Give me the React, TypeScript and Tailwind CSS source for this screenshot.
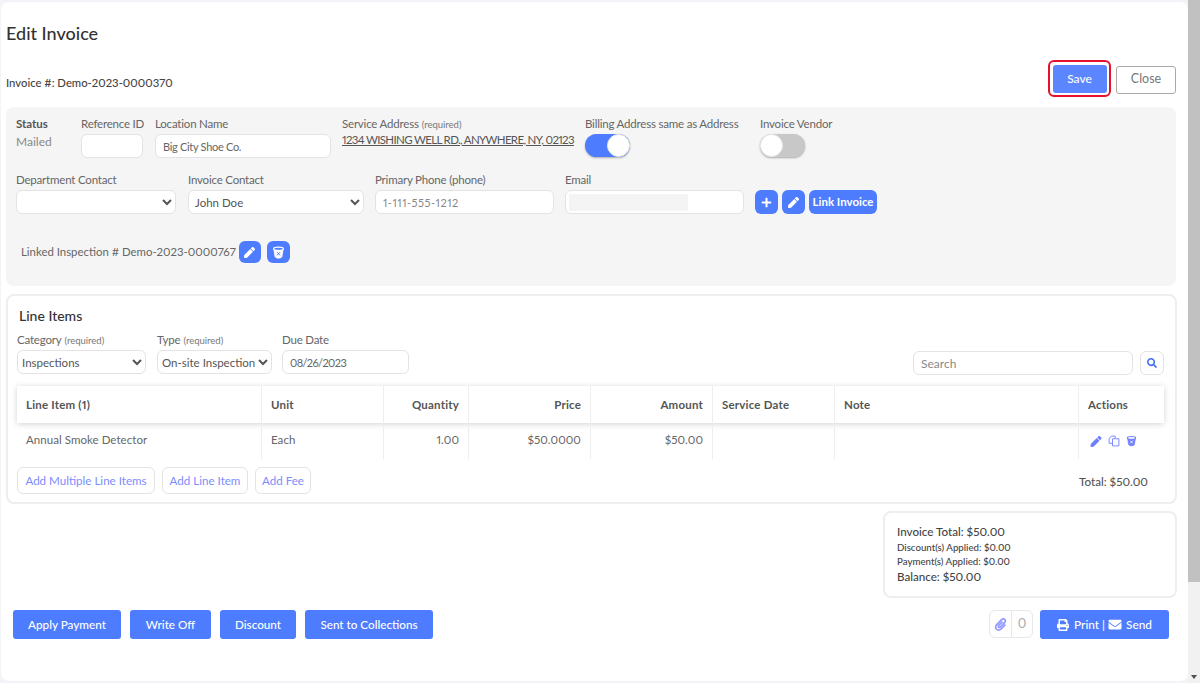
/**
 * EditInvoice page
 */

import { FaPlus, FaPen, FaSearch, FaPrint, FaEnvelope, FaPaperclip } from "react-icons/fa";

const BLUE = "bg-[#4d7cfe]";

const inputClass =
  "h-[24px] rounded-md border border-[#e3e3e3] bg-white px-[7px] text-[11px] text-[#666] outline-none";

const selectClass =
  "h-[24px] rounded-md border border-[#e3e3e3] bg-white text-[11.5px] text-[#555] outline-none";

// Bucket-style delete icon used in the app
function TrashIcon({ className, cut = "#fff" }: { className: string; cut?: string }) {
  return (
    <svg viewBox="0 0 16 16" className={className} fill="none" stroke="currentColor">
      <path d="M2.4 4.5 L3.8 13 Q4.2 15 8 15 Q11.8 15 12.2 13 L13.6 4.5" fill="currentColor" strokeWidth="1" />
      <ellipse cx="8" cy="3.5" rx="6" ry="2" strokeWidth="1.6" fill={cut} />
      <path d="M6 7.5 L10 11.5 M10 7.5 L6 11.5" stroke={cut} strokeWidth="1.2" />
    </svg>
  );
}

function CopyIcon({ className }: { className: string }) {
  return (
    <svg viewBox="0 0 16 16" className={className} fill="none" stroke="currentColor" strokeWidth="1.2">
      <path d="M1.5 11 V4.5 L5 1.5 H9.5 V4.5" />
      <path d="M6 5 H14.5 V14.5 H6 Z" fill="#fff" />
      <path d="M1.5 11 H6" />
    </svg>
  );
}

function SquareButton({
  children,
  size = "h-[24px] w-[23px]",
}: {
  children: React.ReactNode;
  size?: string;
}) {
  return (
    <button className={`flex ${size} items-center justify-center rounded-md ${BLUE} text-white`}>
      {children}
    </button>
  );
}

function Label({ children, hint }: { children: React.ReactNode; hint?: string }) {
  return (
    <div className="h-[14px] whitespace-nowrap text-[11.5px] leading-[14px] tracking-[-0.2px] text-[#666]">
      {children}
      {hint && <span className="ml-[3px] text-[9.5px] tracking-normal text-[#777]">{hint}</span>}
    </div>
  );
}

function Toggle({ on }: { on: boolean }) {
  return (
    <div
      className={`flex h-[23px] w-[45px] rounded-full shadow-[0_1px_2px_rgba(0,0,0,0.3)] ${
        on ? `justify-end ${BLUE}` : "justify-start bg-[#c8c8c8]"
      }`}
    >
      <div className="h-[23px] w-[23px] rounded-full border border-[#e8e8e8] bg-white" />
    </div>
  );
}

function ActionButton({ label, width }: { label: string; width: string }) {
  return (
    <button className={`flex h-[29px] ${width} items-center justify-center rounded-[3px] text-[11.7px] font-medium text-white ${BLUE}`}>
      {label}
    </button>
  );
}

function OutlineButton({ label, width }: { label: string; width: string }) {
  return (
    <button className={`flex h-[27px] ${width} items-center justify-center rounded-md border border-[#e3e3e3] bg-white text-[11.6px] text-[#7c8cff]`}>
      {label}
    </button>
  );
}

const columns = [
  { label: "Line Item (1)", value: "Annual Smoke Detector", width: "w-[245px]", align: "text-left" },
  { label: "Unit", value: "Each", width: "w-[122px]", align: "text-left" },
  { label: "Quantity", value: "1.00", width: "w-[85px]", align: "text-right" },
  { label: "Price", value: "$50.0000", width: "w-[122px]", align: "text-right" },
  { label: "Amount", value: "$50.00", width: "w-[122px]", align: "text-right" },
  { label: "Service Date", value: "", width: "w-[122px]", align: "text-left" },
  { label: "Note", value: "", width: "w-[244px]", align: "text-left" },
];

export default function App() {
  return (
    <div className="flex h-[683px] w-[1200px] overflow-hidden bg-[#f3f3f8] font-['Lato',sans-serif] proportional-nums">
      {/* Page card */}
      <div className="mt-[2px] mb-[2px] ml-[1px] w-[1187px] rounded-lg bg-white pr-[12px] pl-[5px]">
        <h1 className="mt-[20px] text-[18px] leading-[22px] font-medium text-[#333]">Edit Invoice</h1>

        {/* Invoice number and top buttons */}
        <div className="mt-[15px] flex h-[39px] items-center justify-between">
          <div className="mt-[10px] text-[11.3px] font-medium text-[#444]">Invoice #: Demo-2023-0000370</div>
          <div className="flex items-center gap-[5px]">
            <div className="rounded-md border-2 border-[#e8112d] p-[2.5px]">
              <button className="block h-[28px] w-[54px] rounded-[3px] bg-[#5c86ff] text-[12px] font-medium text-white">
                Save
              </button>
            </div>
            <button className="mt-[2px] h-[28px] w-[60px] rounded-[3px] border border-[#aaa] bg-white text-[12.5px] text-[#777]">
              Close
            </button>
          </div>
        </div>

        {/* Invoice details panel */}
        <div className="mt-[9px] h-[179px] w-[1170px] rounded-lg bg-[#f5f5f5] pt-[10px] pl-[10px]">
          <div className="flex">
            <div className="w-[65px]">
              <div className="h-[14px] text-[11.5px] leading-[14px] font-bold text-[#555]">Status</div>
              <div className="mt-[2px] text-[12px] text-[#888]">Mailed</div>
            </div>
            <div className="w-[74px]">
              <Label>Reference ID</Label>
              <input className={`${inputClass} mt-[3px] w-[62px]`} />
            </div>
            <div className="w-[187px]">
              <Label>Location Name</Label>
              <input className={`${inputClass} mt-[3px] w-[176px] tracking-[-0.3px]`} defaultValue="Big City Shoe Co." />
            </div>
            <div className="w-[243px]">
              <Label hint="(required)">Service Address</Label>
              <div className="whitespace-nowrap text-[11.5px] tracking-[-0.67px] text-[#555] underline">
                1234 WISHING WELL RD., ANYWHERE, NY, 02123
              </div>
            </div>
            <div className="w-[175px]">
              <Label>Billing Address same as Address</Label>
              <div className="mt-[3px]">
                <Toggle on />
              </div>
            </div>
            <div>
              <Label>Invoice Vendor</Label>
              <div className="mt-[3px]">
                <Toggle on={false} />
              </div>
            </div>
          </div>

          <div className="mt-[15px] flex items-end">
            <div className="w-[172px]">
              <Label>Department Contact</Label>
              <select className={`${selectClass} mt-[3px] w-[160px]`}>
                <option></option>
              </select>
            </div>
            <div className="w-[187px]">
              <Label>Invoice Contact</Label>
              <select className={`${selectClass} mt-[3px] w-[176px] pl-[2px]`}>
                <option>John Doe</option>
              </select>
            </div>
            <div className="w-[190px]">
              <Label>Primary Phone (phone)</Label>
              <input
                className={`${inputClass} mt-[3px] w-[179px] tracking-[0.5px] placeholder:text-[#888]`}
                placeholder="1-111-555-1212"
              />
            </div>
            <div className="w-[190px]">
              <Label>Email</Label>
              <div className="mt-[3px] flex h-[24px] w-[179px] items-center rounded-md border border-[#e3e3e3] bg-white pl-[3px]">
                <div className="h-[17px] w-[119px] bg-[#f4f4f4]" />
              </div>
            </div>
            <div className="flex gap-[4px]">
              <SquareButton>
                <FaPlus className="h-[11px] w-[11px]" />
              </SquareButton>
              <SquareButton>
                <FaPen className="h-[11px] w-[11px]" />
              </SquareButton>
              <SquareButton size="h-[24px] w-[68px]">
                <span className="text-[11.5px] font-bold">Link Invoice</span>
              </SquareButton>
            </div>
          </div>

          <div className="mt-[27px] flex items-center pl-[5px]">
            <span className="text-[11.4px] text-[#666]">Linked Inspection # Demo-2023-0000767</span>
            <div className="ml-[3px] flex gap-[6px]">
              <SquareButton size="h-[22px] w-[22px]">
                <FaPen className="h-[11px] w-[11px]" />
              </SquareButton>
              <SquareButton size="h-[22px] w-[23px]">
                <TrashIcon className="h-[13px] w-[13px] text-white" cut="#4d7cfe" />
              </SquareButton>
            </div>
          </div>
        </div>

        {/* Line items card */}
        <div className="mt-[8px] h-[210px] w-[1171px] rounded-lg border-2 border-[#eeeeee] pt-[11px] pl-[9px]">
          <div className="pl-[2px] text-[14px] leading-[18px] font-medium text-[#333]">Line Items</div>

          <div className="mt-[8px] flex items-end">
            <div className="w-[140px]">
              <Label hint="(required)">Category</Label>
              <select className={`${selectClass} mt-[3px] w-[129px]`}>
                <option>Inspections</option>
              </select>
            </div>
            <div className="w-[125px]">
              <Label hint="(required)">Type</Label>
              <select className={`${selectClass} mt-[3px] w-[115px]`}>
                <option>On-site Inspection</option>
              </select>
            </div>
            <div className="w-[631px]">
              <Label>Due Date</Label>
              <input className={`${inputClass} mt-[3px] w-[127px] tracking-[-0.6px]`} defaultValue="08/26/2023" />
            </div>
            <input
              className="mb-[-1px] h-[24px] w-[220px] rounded-md border border-[#e3e3e3] bg-white px-[7px] text-[12px] text-[#666] outline-none placeholder:text-[#8a8a8a]"
              placeholder="Search"
            />
            <button className="mb-[-1px] ml-[7px] flex h-[24px] w-[24px] items-center justify-center rounded-md border border-[#e3e3e3] bg-white text-[#3f6cf5]">
              <FaSearch className="h-[10px] w-[10px]" />
            </button>
          </div>

          {/* Table */}
          <div className="mt-[12px] w-[1147px]">
            <div className="flex h-[37px] bg-white shadow-[0_1px_6px_rgba(0,0,0,0.18)]">
              {columns.map((col) => (
                <div
                  key={col.label}
                  className={`${col.width} border-r border-[#eeeeee] px-[9px] text-[11.5px] leading-[37px] font-bold tracking-[0.2px] text-[#555] ${col.align}`}
                >
                  {col.label}
                </div>
              ))}
              <div className="flex-1 px-[9px] text-[11.5px] leading-[37px] font-bold tracking-[0.2px] text-[#555]">
                Actions
              </div>
            </div>
            <div className="flex h-[36px]">
              {columns.map((col) => (
                <div
                  key={col.label}
                  className={`${col.width} border-r border-[#eeeeee] px-[9px] text-[11.5px] leading-[34px] tracking-[0.05px] text-[#666] ${col.align}`}
                >
                  {col.value}
                </div>
              ))}
              <div className="flex flex-1 items-center gap-[6px] pl-[11px] text-[#6f7dff]">
                <FaPen className="h-[11px] w-[12px]" />
                <CopyIcon className="h-[12px] w-[12px]" />
                <TrashIcon className="h-[12px] w-[11px]" />
              </div>
            </div>
          </div>

          {/* Add buttons and total */}
          <div className="mt-[8px] flex w-[1131px] items-center justify-between">
            <div className="flex gap-[7px]">
              <OutlineButton label="Add Multiple Line Items" width="w-[138px]" />
              <OutlineButton label="Add Line Item" width="w-[86px]" />
              <OutlineButton label="Add Fee" width="w-[56px]" />
            </div>
            <div className="mt-[3px] text-[11.6px] font-medium text-[#555]">Total: $50.00</div>
          </div>
        </div>

        {/* Totals summary */}
        <div className="mt-[7px] ml-[877px] h-[87px] w-[294px] rounded-lg border-2 border-[#eeeeee] pt-[11px] pl-[12px] text-[#444]">
          <div className="text-[11.6px] leading-[16px] font-medium">Invoice Total: $50.00</div>
          <div className="text-[9.7px] leading-[14px] font-medium">Discount(s) Applied: $0.00</div>
          <div className="text-[9.7px] leading-[15px] font-medium">Payment(s) Applied: $0.00</div>
          <div className="text-[11.6px] leading-[15px] font-medium">Balance: $50.00</div>
        </div>

        {/* Bottom actions */}
        <div className="mt-[12px] flex items-start justify-between pr-[7px] pl-[7px]">
          <div className="flex gap-[9px]">
            <ActionButton label="Apply Payment" width="w-[108px]" />
            <ActionButton label="Write Off" width="w-[81px]" />
            <ActionButton label="Discount" width="w-[76px]" />
            <ActionButton label="Sent to Collections" width="w-[128px]" />
          </div>
          <div className="flex gap-[7px]">
            <div className="flex h-[28px] w-[44px] rounded-md border border-[#e8e8e8] bg-white">
              <div className="flex w-[22px] items-center justify-center border-r border-[#e8e8e8] text-[#8f97ff]">
                <FaPaperclip className="h-[13px] w-[13px]" />
              </div>
              <div className="flex flex-1 items-center justify-center text-[13px] text-[#aaa]">0</div>
            </div>
            <button className={`flex h-[29px] w-[129px] items-center justify-center rounded-[3px] text-[11.8px] font-medium text-white ${BLUE}`}>
              <FaPrint className="mr-[5px] h-[12px] w-[12px]" />
              Print
              <span className="mx-[3px] font-normal">|</span>
              <FaEnvelope className="mr-[4px] h-[13px] w-[14px]" />
              Send
            </button>
          </div>
        </div>
      </div>

      {/* Scrollbar */}
      <div className="flex w-[12px] flex-col bg-[#f1f1f1]">
        <div className="h-[582px] bg-[#c1c1c1]" />
        <div className="flex-1" />
        <div className="mx-auto mb-[4px] h-0 w-0 border-x-[3px] border-t-[4px] border-x-transparent border-t-[#505050]" />
      </div>
    </div>
  );
}
